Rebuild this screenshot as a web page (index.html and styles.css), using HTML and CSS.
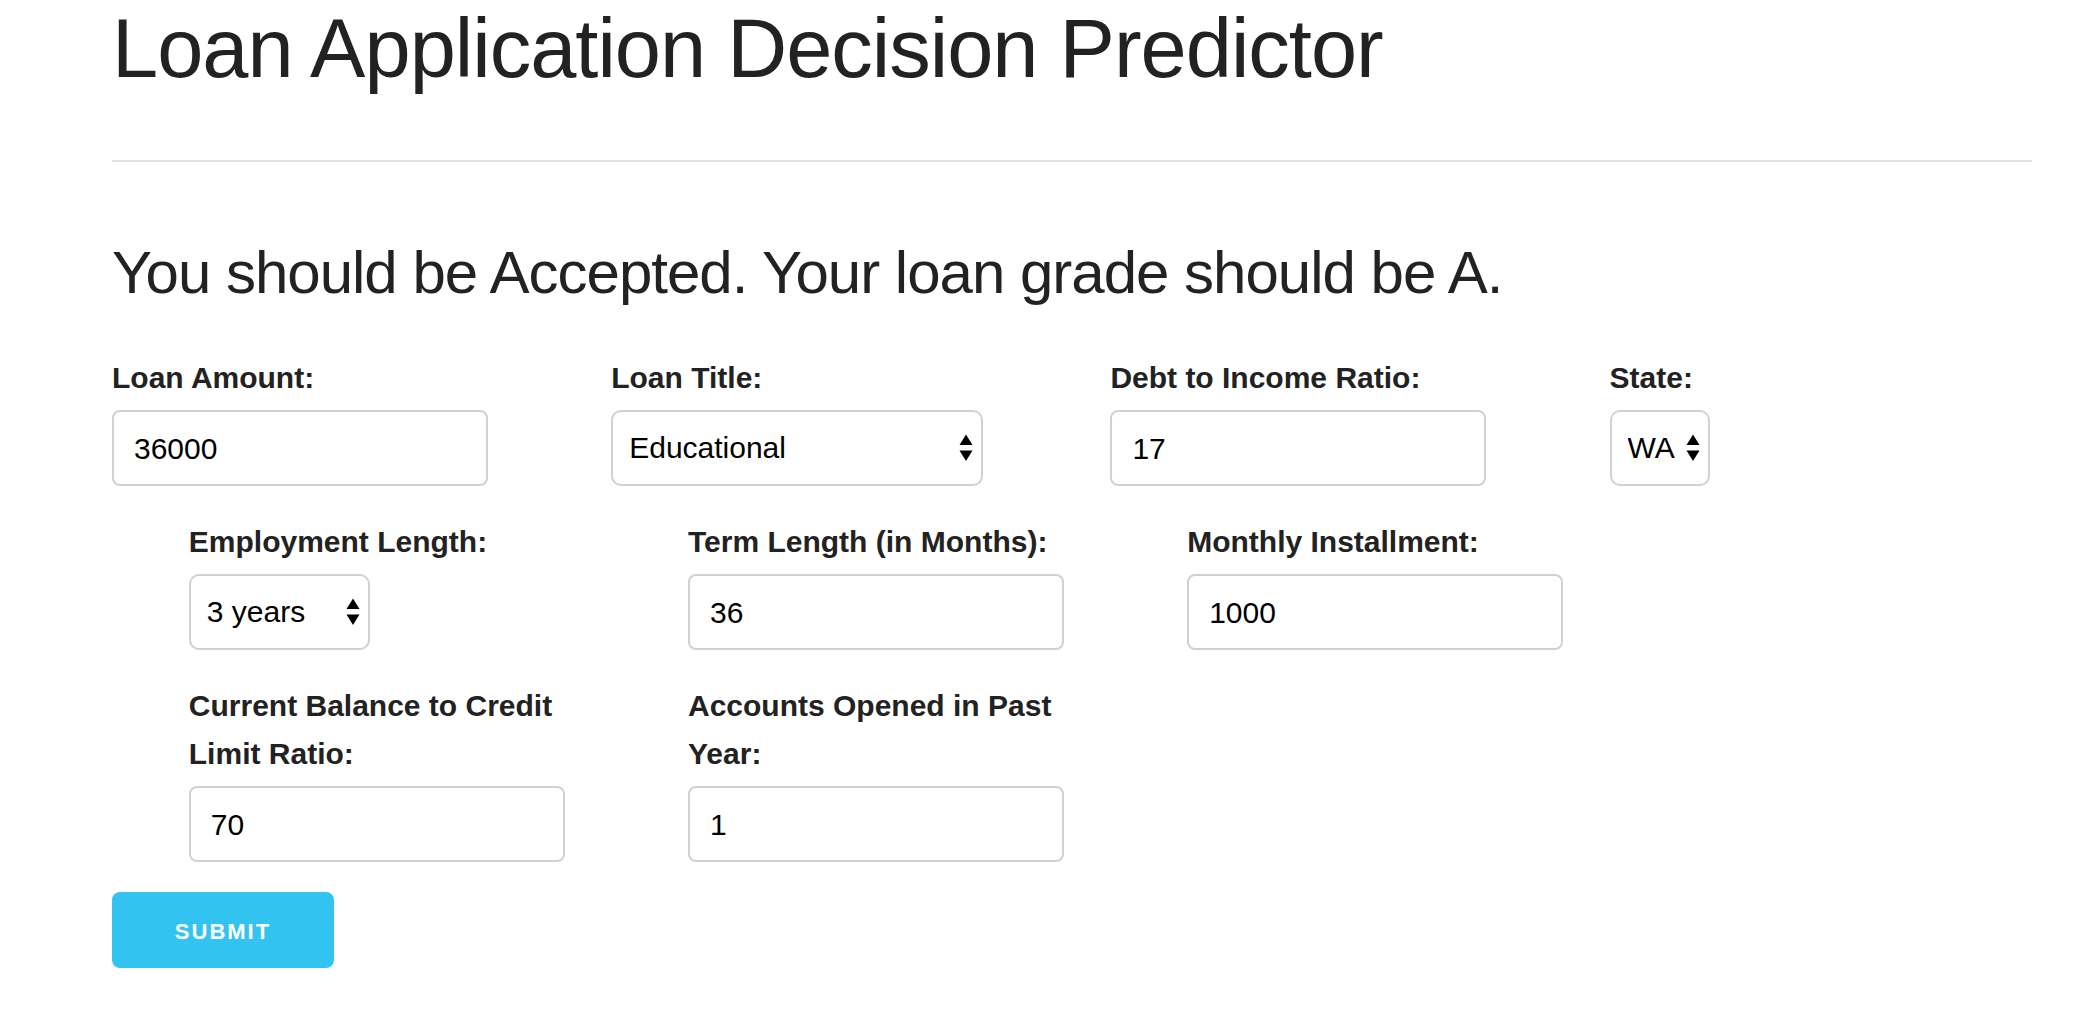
FILE: index.html
```html
<!DOCTYPE html>
<html lang="en">
<head>
  <meta charset="utf-8">
  <meta name="viewport" content="width=device-width, initial-scale=1">
  <title>Loan Application Decision Predictor</title>
  <link rel="stylesheet" href="styles.css">
</head>
<body>
  <main class="container">
    <h1 class="title">Loan Application Decision Predictor</h1>
    <hr class="rule">
    <h2 class="result">You should be Accepted. Your loan grade should be A.</h2>
    <form class="form">
      <div class="row">
        <div class="field">
          <label class="label" for="amount">Loan Amount:</label>
          <input class="input" id="amount" type="text" value="36000">
        </div>
        <div class="field">
          <label class="label" for="title">Loan Title:</label>
          <div class="picker picker-wide">
            <select class="select" id="title"><option>Educational</option></select>
            <svg class="arrows" viewBox="0 0 14 28" aria-hidden="true"><path d="M7 0.5L13.5 11H0.5ZM0.5 16.5H13.5L7 27Z"/></svg>
          </div>
        </div>
        <div class="field">
          <label class="label" for="dti">Debt to Income Ratio:</label>
          <input class="input" id="dti" type="text" value="17">
        </div>
        <div class="field">
          <label class="label" for="state">State:</label>
          <div class="picker picker-narrow">
            <select class="select" id="state"><option>WA</option></select>
            <svg class="arrows" viewBox="0 0 14 28" aria-hidden="true"><path d="M7 0.5L13.5 11H0.5ZM0.5 16.5H13.5L7 27Z"/></svg>
          </div>
        </div>
      </div>
      <div class="row row-inset">
        <div class="field">
          <label class="label" for="employment">Employment Length:</label>
          <div class="picker picker-medium">
            <select class="select" id="employment"><option>3 years</option></select>
            <svg class="arrows" viewBox="0 0 14 28" aria-hidden="true"><path d="M7 0.5L13.5 11H0.5ZM0.5 16.5H13.5L7 27Z"/></svg>
          </div>
        </div>
        <div class="field">
          <label class="label" for="term">Term Length (in Months):</label>
          <input class="input" id="term" type="text" value="36">
        </div>
        <div class="field">
          <label class="label" for="installment">Monthly Installment:</label>
          <input class="input" id="installment" type="text" value="1000">
        </div>
      </div>
      <div class="row row-inset">
        <div class="field">
          <label class="label" for="balance">Current Balance to Credit Limit Ratio:</label>
          <input class="input" id="balance" type="text" value="70">
        </div>
        <div class="field">
          <label class="label" for="accounts">Accounts Opened in Past Year:</label>
          <input class="input" id="accounts" type="text" value="1">
        </div>
      </div>
      <button class="submit" type="button">Submit</button>
    </form>
  </main>
</body>
</html>
```
FILE: styles.css
```css
* {
  box-sizing: border-box;
}

body {
  margin: 0;
  background: #fff;
  color: #222;
  font-family: "Liberation Sans", Arial, Helvetica, sans-serif;
  font-size: 30px;
  line-height: 48px;
}

.container {
  padding: 0 52px 48px 112px;
}

.title,
.result {
  margin: 0;
  font-weight: 400;
  letter-spacing: -1px;
}

.title {
  font-size: 83px;
  line-height: 98px;
}

.rule {
  margin: 62px 0 72px;
  border: 0;
  border-top: 2px solid #e1e1e1;
}

.result {
  margin-bottom: 40px;
  font-size: 60px;
  line-height: 78px;
}

.form {
  display: flex;
  flex-direction: column;
  align-items: flex-start;
  gap: 30px;
}

/* Twelve-column rhythm: each field is 22% wide with 4% gutters */
.row {
  display: flex;
  gap: 4%;
  width: 100%;
}

.row-inset .field:first-child {
  margin-left: 4%;
}

.field {
  flex: 0 0 22%;
}

.label {
  display: block;
  margin-bottom: 8px;
  padding-top: 2px;
  font-weight: 700;
}

.input,
.select {
  display: block;
  height: 76px;
  border: 2px solid #d1d1d1;
  background: #fff;
  color: #000;
  font: inherit;
}

.input {
  width: 376px;
  max-width: 100%;
  padding: 14px 20px 12px;
  border-radius: 8px;
}

.select {
  width: 100%;
  padding: 0 16px;
  border-radius: 10px;
  appearance: none;
}

.picker {
  position: relative;
  max-width: 100%;
}

.picker-wide {
  width: 372px;
}

.picker-medium {
  width: 181px;
}

.picker-narrow {
  width: 100px;
}

.arrows {
  position: absolute;
  top: 24px;
  right: 10px;
  width: 14px;
  height: 28px;
  pointer-events: none;
}

.submit {
  min-width: 222px;
  height: 76px;
  padding: 4px 56px 0;
  border: 0;
  border-radius: 8px;
  background: #33c3f0;
  color: #fff;
  font-family: inherit;
  font-size: 22px;
  font-weight: 700;
  letter-spacing: 2px;
  text-transform: uppercase;
}
```
